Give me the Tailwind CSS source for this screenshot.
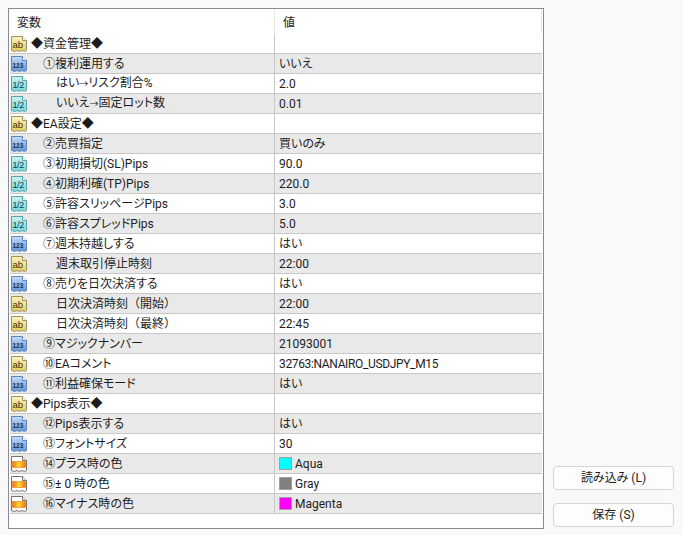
<!DOCTYPE html>
<html lang="ja">
<head>
  <meta charset="UTF-8" />
  <title>変数</title>
  <script src="https://cdn.jsdelivr.net/npm/@tailwindcss/browser@4"></script>
</head>
<body class="w-[683px] h-[535px] overflow-hidden bg-[#f9f9f9] text-[12px] leading-[20px] text-[#1c1c1c] font-['Roboto','Noto_Sans_CJK_JP',sans-serif] [font-feature-settings:'palt']">
  <svg class="absolute w-0 h-0">
    <defs>
      <linearGradient id="blue" x1="0" y1="0" x2="0" y2="1"><stop offset="0" stop-color="#c4dcf6" /><stop offset="1" stop-color="#5d97dc" /></linearGradient>
      <linearGradient id="cyan" x1="0" y1="0" x2="0" y2="1"><stop offset="0" stop-color="#c8f2f2" /><stop offset="1" stop-color="#76d6dc" /></linearGradient>
      <linearGradient id="gold" x1="0" y1="0" x2="0" y2="1"><stop offset="0" stop-color="#fbf3c0" /><stop offset="1" stop-color="#e2cd62" /></linearGradient>
      <linearGradient id="heat" x1="0" y1="0" x2="1" y2="0"><stop offset="0" stop-color="#f26a10" /><stop offset="0.5" stop-color="#ffe030" /><stop offset="1" stop-color="#f26a10" /></linearGradient>
      <symbol id="ab" viewBox="0 0 16 16">
        <path d="M.5.5H11.5L15.5 4.5V14.5L13.5 15.5L11 14.5L8.5 15.5L6 14.5L3.5 15.5L.5 14.5Z" fill="url(#gold)" stroke="#9a9260" />
        <path d="M11.5.5V4.5H15.5" fill="#fff" stroke="#9a9260" />
        <text x="1.5" y="12" font-size="9.5" font-family="Liberation Sans" fill="#3a3410">ab</text>
      </symbol>
      <symbol id="num" viewBox="0 0 16 16">
        <path d="M.5.5H11.5L15.5 4.5V14.5L13.5 15.5L11 14.5L8.5 15.5L6 14.5L3.5 15.5L.5 14.5Z" fill="url(#blue)" stroke="#5f86b4" />
        <path d="M11.5.5V4.5H15.5" fill="#fff" stroke="#5f86b4" />
        <text x="1.5" y="11.5" font-size="6.5" font-weight="700" font-family="Liberation Sans" fill="#12315e">123</text>
      </symbol>
      <symbol id="half" viewBox="0 0 16 16">
        <path d="M.5.5H11.5L15.5 4.5V14.5L13.5 15.5L11 14.5L8.5 15.5L6 14.5L3.5 15.5L.5 14.5Z" fill="url(#cyan)" stroke="#58a4aa" />
        <path d="M11.5.5V4.5H15.5" fill="#fff" stroke="#58a4aa" />
        <text x="1.5" y="11.5" font-size="9" letter-spacing="-.4" font-family="Liberation Sans" fill="#06424e">1/2</text>
      </symbol>
      <symbol id="color" viewBox="0 0 16 16">
        <path d="M.5.5H11.5L15.5 4.5V14.5L13.5 15.5L11 14.5L8.5 15.5L6 14.5L3.5 15.5L.5 14.5Z" fill="#fff" stroke="#77736c" />
        <path d="M11.5.5V4.5H15.5" fill="#eee" stroke="#77736c" />
        <rect x="1.5" y="5.5" width="13" height="6" fill="url(#heat)" stroke="#ea7a20" stroke-width=".6" />
      </symbol>
    </defs>
  </svg>

  <div class="flex items-end gap-[9px] pt-2 pl-2">
    <!-- table -->
    <div class="w-[536px] h-[521px] border border-[#868a91] bg-white p-px">
      <div class="flex h-6">
        <div class="w-[265px] pl-[7px] pt-[3px] border-r border-[#e5e5e5]">変数</div>
        <div class="flex-1 pl-2 pt-[3px] border-r border-[#e5e5e5]">値</div>
      </div>
      <div id="rows"></div>
    </div>

    <!-- buttons -->
    <div class="flex flex-col gap-[13px] pb-[2px]">
      <button class="w-[121px] h-6 rounded border border-[#d4d4d4] bg-[#fdfdfd]">読み込み (L)</button>
      <button class="w-[121px] h-6 rounded border border-[#d4d4d4] bg-[#fdfdfd]">保存 (S)</button>
    </div>
  </div>

  <script>
    const arrow = '<span class="text-[9px]">→</span>';
    const wide = s => `<span class="[font-feature-settings:normal]">${s}</span>`;
    // icon, indent level, name, value, swatch colour
    const rows = [
      ["ab", 0, "◆資金管理◆", ""],
      ["num", 1, "①複利運用する", "いいえ"],
      ["half", 2, `はい${arrow}リスク割合%`, "2.0"],
      ["half", 2, `いいえ${arrow}固定ロット数`, "0.01"],
      ["ab", 0, "◆EA設定◆", ""],
      ["num", 1, "②売買指定", "買いのみ"],
      ["half", 1, "③初期損切(SL)Pips", "90.0"],
      ["half", 1, "④初期利確(TP)Pips", "220.0"],
      ["half", 1, "⑤許容スリッページPips", "3.0"],
      ["half", 1, "⑥許容スプレッドPips", "5.0"],
      ["num", 1, "⑦週末持越しする", "はい"],
      ["ab", 2, "週末取引停止時刻", "22:00"],
      ["num", 1, "⑧売りを日次決済する", "はい"],
      ["ab", 2, `日次決済時刻${wide("（開始）")}`, "22:00"],
      ["ab", 2, `日次決済時刻${wide("（最終）")}`, "22:45"],
      ["num", 1, "⑨マジックナンバー", "21093001"],
      ["ab", 1, "⑩EAコメント", '<span class="tracking-[-0.35px]">32763:NANAIRO_USDJPY_M15</span>'],
      ["num", 1, "⑪利益確保モード", "はい"],
      ["ab", 0, "◆Pips表示◆", ""],
      ["num", 1, "⑫Pips表示する", "はい"],
      ["num", 1, "⑬フォントサイズ", "30"],
      ["color", 1, "⑭プラス時の色", "Aqua", "#00ffff"],
      ["color", 1, "⑮± 0 時の色", "Gray", "#808080"],
      ["color", 1, "⑯マイナス時の色", "Magenta", "#ff00ff"],
    ];
    const indent = ["ml-1", "ml-4", "ml-[29px]"];

    document.getElementById("rows").innerHTML = rows.map((r, i) => {
      const [icon, level, name, value, color] = r;
      const bg = i % 2 ? "bg-[#e9e9e9]" : "";
      const swatch = color
        ? `<span class="w-[13px] h-[13px] mr-[3px] border border-[#a0a0a0]" style="background:${color}"></span>`
        : "";
      return `<div class="flex h-5 border-b border-[#c8c8c8] ${bg}">
        <div class="w-[265px] flex items-center border-r border-[#c8c8c8]">
          <svg class="w-4 h-4 ml-px shrink-0"><use href="#${icon}" /></svg>
          <span class="${indent[level]}">${name}</span>
        </div>
        <div class="flex-1 flex items-center pl-1">${swatch}${value}</div>
      </div>`;
    }).join("");
  </script>
</body>
</html>
